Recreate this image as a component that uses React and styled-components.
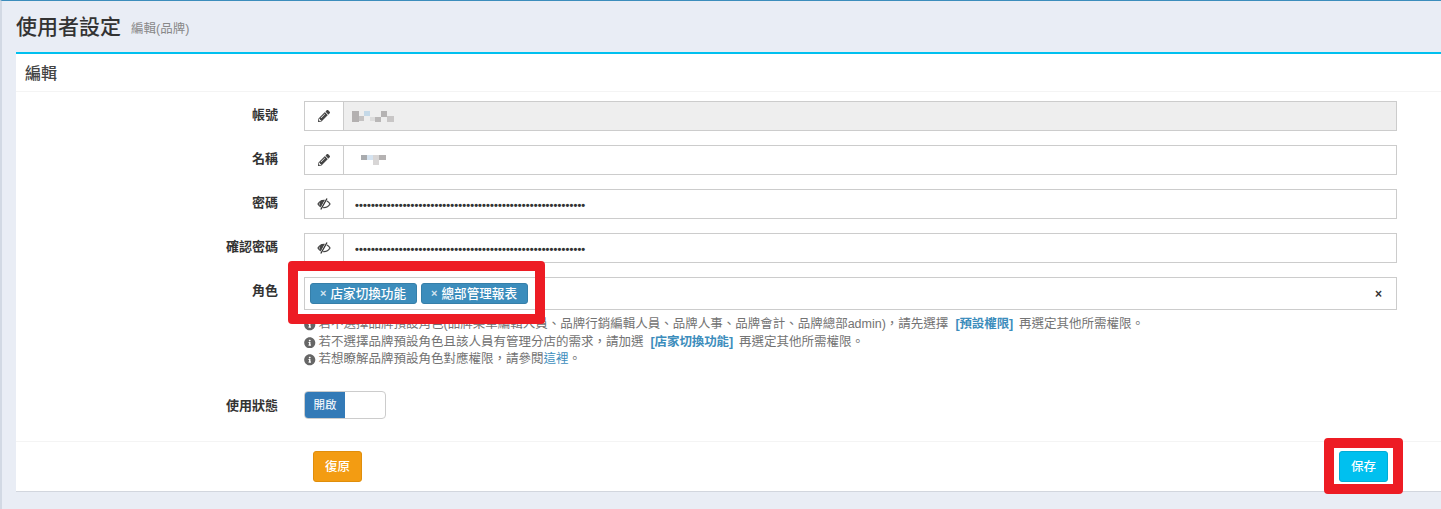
import React from "react";
import styled, { createGlobalStyle } from "styled-components";
import { FaPencilAlt, FaInfoCircle } from "react-icons/fa";

const Global = createGlobalStyle`
  html, body { margin: 0; padding: 0; background: #e9edf5; overflow: hidden; }
  * { box-sizing: border-box; }
`;

const font = `"Liberation Sans", "Noto Sans CJK TC", sans-serif`;

const Page = styled.div`
  width: 1441px;
  height: 509px;
  overflow: hidden;
  background: #e9edf5;
  border-top: 1px solid #3c8dbc;
  border-left: 2px solid #d2d9e4;
  padding-left: 14px;
  font-family: ${font};
  color: #333;
`;
const Heading = styled.div`
  height: 51px;
  display: flex;
  align-items: center;
  gap: 10px;
  padding-bottom: 4px;
`;
const Title = styled.h1`
  margin: 0;
  font-size: 21px;
  font-weight: 500;
  color: #333;
`;
const Sub = styled.small`
  font-size: 12.5px;
  color: #888;
  padding-top: 5px;
`;
const Card = styled.section`
  background: #fff;
  border-top: 2px solid #00c0ef;
  border-bottom: 1px solid #d2d6de;
  height: 440px;
  display: flex;
  flex-direction: column;
`;
const CardHead = styled.div`
  height: 38px;
  display: flex;
  align-items: center;
  padding-left: 9px;
  padding-bottom: 2px;
  font-size: 16px;
  font-weight: 500;
  color: #444;
  border-bottom: 1px solid #f4f4f4;
`;
const Form = styled.div`
  flex: 1;
  padding-top: 9px;
  display: grid;
  grid-template-columns: 262px 1093px;
  column-gap: 26px;
  align-content: start;
`;
const Label = styled.label`
  font-size: 13px;
  font-weight: 700;
  text-align: right;
  color: #333;
  height: ${(p) => p.$h || 30}px;
  line-height: ${(p) => p.$lh || 28}px;
`;
const Field = styled.div`
  margin-bottom: ${(p) => p.$mb ?? 14}px;
  position: relative;
`;
const Group = styled.div`
  display: flex;
  height: 30px;
  border: 1px solid #ccc;
`;
const Addon = styled.span`
  width: 39px;
  flex: none;
  display: flex;
  align-items: center;
  justify-content: center;
  border-right: 1px solid #ccc;
  color: #444;
  font-size: 12px;
`;
const Value = styled.div`
  flex: 1;
  display: flex;
  align-items: center;
  padding-left: ${(p) => p.$pad ?? 11}px;
  background: ${(p) => (p.$disabled ? "#eee" : "#fff")};
`;
const Dots = styled.span`
  font-size: 11px;
  letter-spacing: 0.12px;
  color: #333;
  line-height: 1;
  overflow: hidden;
  width: 231px;
  white-space: nowrap;
  padding-top: 2px;
  font-weight: 700;
`;
const Select = styled.div`
  height: 33px;
  border: 1px solid #ccc;
  display: flex;
  align-items: center;
  gap: 4px;
  padding-left: 5px;
  padding-right: 13px;
  position: relative;
`;
const Tag = styled.span`
  height: 21px;
  width: 107px;
  padding: 0 0 2px 9px;
  display: inline-flex;
  align-items: center;
  gap: 4px;
  background: #3c8dbc;
  border: 1px solid #367fa9;
  border-radius: 3px;
  color: #fff;
  font-size: 12.6px;
  font-weight: 500;
  white-space: nowrap;
`;
const TagX = styled.span`
  color: rgba(255, 255, 255, 0.8);
  font-weight: 700;
  font-size: 11px;
`;
const Clear = styled.span`
  margin-left: auto;
  font-size: 12px;
  font-weight: 700;
  color: #333;
  position: relative;
  left: -1px;
`;
const Help = styled.div`
  padding-top: 6px;
  font-size: 12.5px;
  line-height: 17.6px;
  color: #737373;
  height: 81px;
`;
const HelpLine = styled.div`
  display: flex;
  align-items: center;
  gap: 3px;
  white-space: nowrap;
  svg { color: #666; font-size: 11.5px; flex: none; }
`;
const Strong = styled.b`
  color: #3c8dbc;
  margin: 0 3px 0 4px;
  letter-spacing: -0.1px;
`;
const HelpLink = styled.a`
  color: #3c8dbc;
`;
const Switch = styled.div`
  width: 82px;
  height: 28px;
  border: 1px solid #ccc;
  border-radius: 4px;
  overflow: hidden;
  display: flex;
`;
const SwitchOn = styled.span`
  width: 40px;
  background: #337ab7;
  color: #fff;
  font-size: 11.5px;
  display: flex;
  align-items: center;
  justify-content: center;
  padding-bottom: 3px;
`;
const Foot = styled.div`
  height: 50px;
  border-top: 1px solid #f4f4f4;
  display: flex;
  align-items: flex-start;
  justify-content: space-between;
  padding: 9px 53px 0 297px;
`;
const Btn = styled.button`
  width: 49px;
  height: 31px;
  border-radius: 3px;
  border: 1px solid ${(p) => p.$border};
  background: ${(p) => p.$bg};
  color: #fff;
  font-size: 12.5px;
  font-family: ${font};
  font-weight: 500;
  padding: 0 0 2px;
`;
const SaveWrap = styled.div`
  position: relative;
  display: flex;
`;
const Callout = styled.div`
  position: absolute;
  left: ${(p) => p.$l}px;
  top: ${(p) => p.$t}px;
  width: ${(p) => p.$w}px;
  height: ${(p) => p.$hh}px;
  border: 10px solid #ed1c24;
  border-radius: 4px;
  pointer-events: none;
`;
const Mosaic = ({ cells }) => (
  <svg width="60" height="16" viewBox="0 0 60 16">
    {cells.map(([x, y, w, h, c], i) => (
      <rect key={i} x={x} y={y} width={w} height={h} fill={c} />
    ))}
  </svg>
);
const EyeOff = () => (
  <svg width="14" height="12" viewBox="0 0 14 12" fill="none">
    <path d="M1 6c1.500-2.400 3.500-3.600 6-3.600s4.500 1.200 6 3.600c-1.500 2.400-3.500 3.600-6 3.600S2.500 8.400 1 6z" stroke="#444" strokeWidth="1.300" />
    <path d="M7.500 2.600A3.400 3.400 0 0 0 4.500 8.800z" fill="#444" />
    <path d="M3.800 11.500L10 .5" stroke="#fff" strokeWidth="2.200" />
    <path d="M3.800 11.500L10 .5" stroke="#333" strokeWidth="1.300" />
  </svg>
);
const dots = "•".repeat(58);

export default function App() {
  return (
    <Page>
      <Global />
      <Heading>
        <Title>使用者設定</Title>
        <Sub>編輯(品牌)</Sub>
      </Heading>
      <Card>
        <CardHead>編輯</CardHead>
        <Form>
          <Label>帳號</Label>
          <Field>
            <Group>
              <Addon><FaPencilAlt /></Addon>
              <Value $disabled $pad={8}>
                <Mosaic cells={[
                  [0, 3, 7, 11, "#b3b0b0"], [7, 8, 5, 5, "#c4c2c2"], [12, 3, 6, 5, "#c5d9e8"],
                  [18, 9, 5, 4, "#dcdcdc"], [23, 9, 6, 5, "#b9b7b7"], [29, 3, 6, 6, "#b5b3b3"],
                  [35, 8, 7, 6, "#c8c6c6"],
                ]} />
              </Value>
            </Group>
          </Field>
          <Label>名稱</Label>
          <Field>
            <Group>
              <Addon><FaPencilAlt /></Addon>
              <Value $pad={7}>
                <Mosaic cells={[
                  [10, 3, 6, 5, "#a9abae"], [16, 3, 6, 5, "#d5e3f0"], [22, 3, 6, 10, "#d8d6d6"],
                  [28, 3, 7, 5, "#b5b2b2"],
                ]} />
              </Value>
            </Group>
          </Field>
          <Label>密碼</Label>
          <Field>
            <Group>
              <Addon><EyeOff /></Addon>
              <Value><Dots>{dots}</Dots></Value>
            </Group>
          </Field>
          <Label>確認密碼</Label>
          <Field>
            <Group>
              <Addon><EyeOff /></Addon>
              <Value><Dots>{dots}</Dots></Value>
            </Group>
          </Field>
          <Label $h={33} $lh={27}>角色</Label>
          <Field $mb={0}>
            <Select>
              <Tag><TagX>×</TagX>店家切換功能</Tag>
              <Tag><TagX>×</TagX>總部管理報表</Tag>
              <Clear>×</Clear>
              <Callout $l={-17} $t={-17} $w={257} $hh={63} />
            </Select>
          </Field>
          <span />
          <Help>
            <HelpLine><FaInfoCircle />若不選擇品牌預設角色(品牌菜單編輯人員、品牌行銷編輯人員、品牌人事、品牌會計、品牌總部admin)，請先選擇<Strong>[預設權限]</Strong>再選定其他所需權限。</HelpLine>
            <HelpLine><FaInfoCircle />若不選擇品牌預設角色且該人員有管理分店的需求，請加選<Strong>[店家切換功能]</Strong>再選定其他所需權限。</HelpLine>
            <HelpLine><FaInfoCircle /><span>若想瞭解品牌預設角色對應權限，請參閱<HelpLink>這裡</HelpLink>。</span></HelpLine>
          </Help>
          <Label $h={28} $lh={29}>使用狀態</Label>
          <Field $mb={0}>
            <Switch><SwitchOn>開啟</SwitchOn></Switch>
          </Field>
        </Form>
        <Foot>
          <Btn $bg="#f39c12" $border="#e08e0b">復原</Btn>
          <SaveWrap>
            <Btn $bg="#00c0ef" $border="#00acd6">保存</Btn>
            <Callout $l={-15} $t={-13} $w={79} $hh={56} />
          </SaveWrap>
        </Foot>
      </Card>
    </Page>
  );
}
